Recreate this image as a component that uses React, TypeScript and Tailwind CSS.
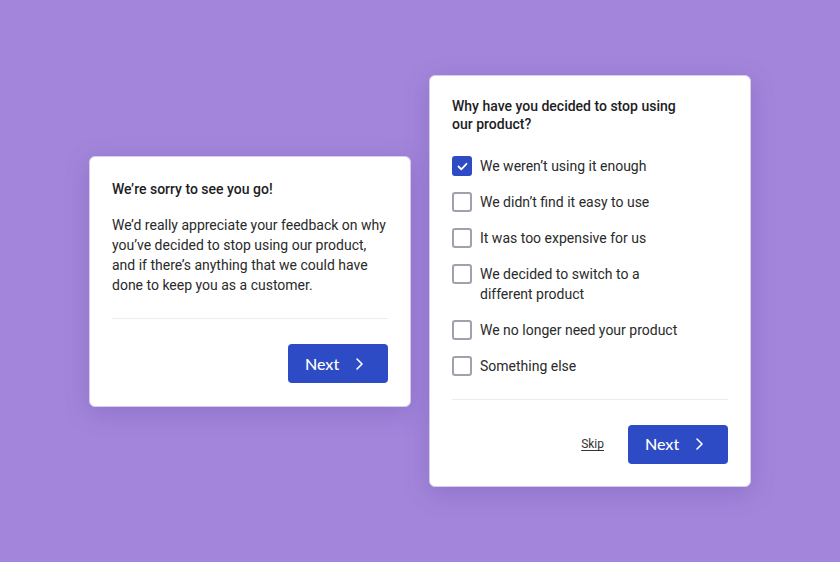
import React from 'react';

const options = [
  { label: 'We weren’t using it enough', checked: true },
  { label: 'We didn’t find it easy to use' },
  { label: 'It was too expensive for us' },
  { label: ['We decided to switch to a', 'different product'] },
  { label: 'We no longer need your product' },
  { label: 'Something else' },
];

function NextButton() {
  return (
    <button className="flex h-[39px] w-[100px] items-center gap-[16px] rounded-[4px] bg-[#2d4bc4] pl-[17px] text-[16px] font-medium text-white [font-family:Lato,'Noto_Sans',sans-serif]">
      <span>Next</span>
      <svg width="9" height="14" viewBox="0 0 9 14" fill="none">
        <path d="M2 2l5 5-5 5" stroke="white" strokeWidth="1.6" strokeLinecap="round" strokeLinejoin="round" />
      </svg>
    </button>
  );
}

function Checkbox({ checked }: { checked?: boolean }) {
  if (checked) {
    return (
      <span className="flex h-5 w-5 shrink-0 items-center justify-center rounded-[3px] bg-[#2d4bc4]">
        <svg width="11" height="9" viewBox="0 0 11 9" fill="none">
          <path d="M1.5 4.5l2.8 2.8L9.5 1.8" stroke="white" strokeWidth="1.8" strokeLinecap="round" strokeLinejoin="round" />
        </svg>
      </span>
    );
  }
  return <span className="h-5 w-5 shrink-0 rounded-[3px] border-2 border-[#a29fae] bg-white" />;
}

export default function App() {
  return (
    <div className="flex h-[562px] w-[840px] items-start bg-[#a386db] text-[#222] [font-family:Roboto,'Liberation_Sans',sans-serif]">
      <div className="ml-[89px] mt-[156px] w-[322px] rounded-[6px] border border-[#d6cfe6] bg-white px-[22px] pt-[22px] pb-[23px] shadow-[0_6px_24px_rgba(80,50,150,0.25)]">
        <h2 className="text-[14px] font-medium leading-[20px] text-[#1d1d1f]">We’re sorry to see you go!</h2>
        <p className="mt-4 text-[14px] leading-[20px] text-[#2a2a2a]">
          We’d really appreciate your feedback on why you’ve decided to stop using our product, and if there’s anything that we could have done to keep you as a customer.
        </p>
        <div className="mt-[23px] border-t border-[#ececec]" />
        <div className="mt-[25px] flex justify-end">
          <NextButton />
        </div>
      </div>

      <div className="ml-[18px] mt-[75px] w-[322px] rounded-[6px] border border-[#d6cfe6] bg-white px-[22px] pt-[21px] pb-[22px] shadow-[0_6px_24px_rgba(80,50,150,0.25)]">
        <h2 className="text-[14px] font-medium leading-[18px] text-[#1d1d1f]">
          Why have you decided to stop using
          <br />
          our product?
        </h2>
        <ul className="mt-[23px] flex flex-col gap-4">
          {options.map((o, i) => (
            <li key={i} className="flex items-start gap-2">
              <Checkbox checked={o.checked} />
              <span className="text-[14px] leading-[20px] text-[#2a2a2a]">
                {Array.isArray(o.label) ? (
                  <>
                    {o.label[0]}
                    <br />
                    {o.label[1]}
                  </>
                ) : (
                  o.label
                )}
              </span>
            </li>
          ))}
        </ul>
        <div className="mt-[23px] border-t border-[#ececec]" />
        <div className="mt-[24px] flex items-center justify-end gap-6">
          <a className="text-[12px] text-[#333] underline underline-offset-2">Skip</a>
          <div className="h-[40px] flex items-center">
            <NextButton />
          </div>
        </div>
      </div>
    </div>
  );
}
